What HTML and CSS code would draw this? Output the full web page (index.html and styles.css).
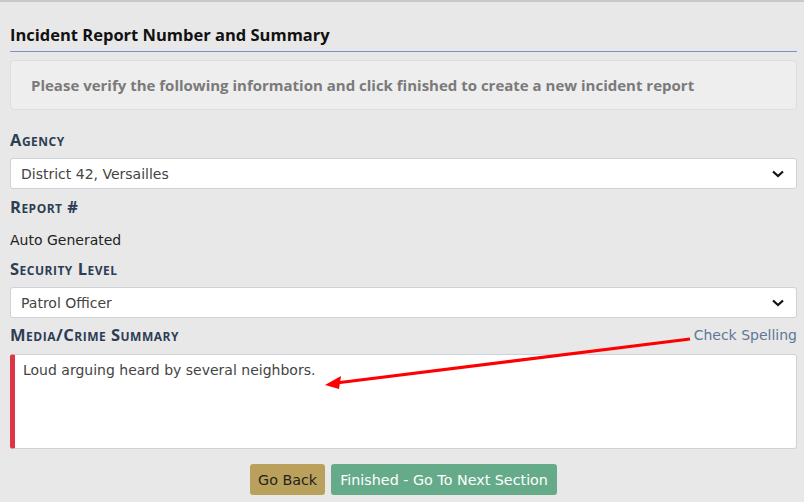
FILE: index.html
```html
<!DOCTYPE html>
<html>
<head>
<meta charset="utf-8">
<link rel="stylesheet" href="styles.css">
</head>
<body>
<div class="topbar"></div>
<div class="page">
  <h1 class="title">Incident Report Number and Summary</h1>
  <div class="notice">Please verify the following information and click finished to create a new incident report</div>

  <div class="label">Agency</div>
  <div class="select"><span>District 42, Versailles</span>
    <svg class="chev" width="12" height="8" viewBox="0 0 12 8"><path d="M1 1.5 L6 6 L11 1.5" fill="none" stroke="#111" stroke-width="2.2"/></svg>
  </div>

  <div class="label">Report #</div>
  <div class="value">Auto Generated</div>

  <div class="label">Security Level</div>
  <div class="select"><span>Patrol Officer</span>
    <svg class="chev" width="12" height="8" viewBox="0 0 12 8"><path d="M1 1.5 L6 6 L11 1.5" fill="none" stroke="#111" stroke-width="2.2"/></svg>
  </div>

  <div class="label-row">
    <div class="label">Media/Crime Summary</div>
    <a class="spell">Check Spelling</a>
  </div>
  <div class="textarea">Loud arguing heard by several neighbors.</div>

  <div class="actions">
    <button class="btn back">Go Back</button>
    <button class="btn next">Finished - Go To Next Section</button>
  </div>
</div>
<svg class="arrow" width="804" height="502" viewBox="0 0 804 502">
  <line x1="690" y1="339" x2="336" y2="383" stroke="#f00" stroke-width="3"/>
  <polygon points="325,385 341,376 339,389" fill="#f00"/>
</svg>
</body>
</html>
```
FILE: styles.css
```css
html, body {
  margin: 0;
  padding: 0;
  background: #e8e8e8;
}
body {
  position: relative;
  width: 804px;
  height: 502px;
  overflow: hidden;
  font-family: "DejaVu Sans", Verdana, sans-serif;
}
.topbar {
  height: 2px;
  background: #c8c8cc;
}
.page {
  padding: 0 7px 0 10px;
}
.title {
  margin: 0;
  padding-top: 20px;
  height: 29px;
  line-height: 25px;
  font-family: "Open Sans", sans-serif;
  font-weight: 700;
  font-size: 16.5px;
  color: #111;
  border-bottom: 1px solid #7f8fc6;
}
.notice {
  margin-top: 8px;
  height: 50px;
  box-sizing: border-box;
  border: 1px solid #dedede;
  border-radius: 4px;
  background: #eeeeee;
  padding-left: 20px;
  display: flex;
  align-items: center;
  font-family: "Open Sans", sans-serif;
  font-weight: 700;
  font-size: 15px;
  color: #7a7a7a;
}
.label {
  font-family: "Open Sans", sans-serif;
  font-weight: 700;
  font-variant: small-caps;
  font-size: 16.5px;
  letter-spacing: 0.5px;
  color: #2c3e55;
  height: 20px;
  line-height: 20px;
}
.notice + .label {
  margin-top: 20px;
}
.select {
  margin-top: 8px;
  height: 31px;
  box-sizing: border-box;
  background: #fff;
  border: 1px solid #cdd2da;
  border-radius: 3px;
  display: flex;
  align-items: center;
  justify-content: space-between;
  padding: 0 12px 0 10px;
  font-size: 14px;
  color: #444;
}
.select + .label {
  margin-top: 8px;
}
.value {
  margin-top: 13px;
  height: 20px;
  line-height: 20px;
  font-size: 14px;
  color: #222;
}
.value + .label {
  margin-top: 9px;
}
.label-row {
  margin-top: 7px;
  display: flex;
  justify-content: space-between;
  align-items: center;
}
.spell {
  font-size: 14px;
  color: #5d7896;
  font-family: "DejaVu Sans", sans-serif;
}
.textarea {
  margin-top: 9px;
  height: 95px;
  box-sizing: border-box;
  background: #fff;
  border: 1px solid #cdd2da;
  border-left: 5px solid #dc3545;
  border-radius: 3px;
  padding: 7px 8px;
  font-size: 14px;
  color: #444;
}
.actions {
  margin-top: 15px;
  display: flex;
  justify-content: center;
  gap: 6px;
}
.btn {
  height: 31px;
  border: none;
  border-radius: 3px;
  padding: 0 9px;
  font-family: "DejaVu Sans", sans-serif;
  font-size: 14.3px;
}
.back {
  background: #baa15b;
  color: #222;
  padding: 0 8px;
}
.next {
  background: #65ab8a;
  color: #fff;
}
.arrow {
  position: absolute;
  left: 0;
  top: 0;
  pointer-events: none;
}
```
